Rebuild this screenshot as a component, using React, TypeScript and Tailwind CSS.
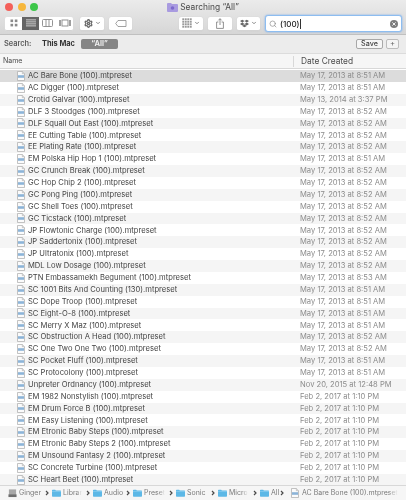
import React from "react";
import { FaDropbox } from "react-icons/fa";
import { Search, Settings, ChevronDown } from "lucide-react";

const rows: [string, string][] = [
  ["AC Bare Bone (100).mtpreset", "May 17, 2013 at 8:51 AM"],
  ["AC Digger (100).mtpreset", "May 17, 2013 at 8:51 AM"],
  ["Crotid Galvar (100).mtpreset", "May 13, 2014 at 3:37 PM"],
  ["DLF 3 Stoodges (100).mtpreset", "May 17, 2013 at 8:52 AM"],
  ["DLF Squall Out East (100).mtpreset", "May 17, 2013 at 8:52 AM"],
  ["EE Cutting Table (100).mtpreset", "May 17, 2013 at 8:52 AM"],
  ["EE Plating Rate (100).mtpreset", "May 17, 2013 at 8:52 AM"],
  ["EM Polska Hip Hop 1 (100).mtpreset", "May 17, 2013 at 8:51 AM"],
  ["GC Crunch Break (100).mtpreset", "May 17, 2013 at 8:52 AM"],
  ["GC Hop Chip 2 (100).mtpreset", "May 17, 2013 at 8:52 AM"],
  ["GC Pong Ping (100).mtpreset", "May 17, 2013 at 8:52 AM"],
  ["GC Shell Toes (100).mtpreset", "May 17, 2013 at 8:52 AM"],
  ["GC Ticstack (100).mtpreset", "May 17, 2013 at 8:52 AM"],
  ["JP Flowtonic Charge (100).mtpreset", "May 17, 2013 at 8:52 AM"],
  ["JP Saddertonix (100).mtpreset", "May 17, 2013 at 8:52 AM"],
  ["JP Ultratonix (100).mtpreset", "May 17, 2013 at 8:52 AM"],
  ["MDL Low Dosage (100).mtpreset", "May 17, 2013 at 8:52 AM"],
  ["PTN Embassamekh Begument (100).mtpreset", "May 17, 2013 at 8:53 AM"],
  ["SC 1001 Bits And Counting (130).mtpreset", "May 17, 2013 at 8:51 AM"],
  ["SC Dope Troop (100).mtpreset", "May 17, 2013 at 8:51 AM"],
  ["SC Eight-O-8 (100).mtpreset", "May 17, 2013 at 8:51 AM"],
  ["SC Merry X Maz (100).mtpreset", "May 17, 2013 at 8:51 AM"],
  ["SC Obstruction A Head (100).mtpreset", "May 17, 2013 at 8:52 AM"],
  ["SC One Two One Two (100).mtpreset", "May 17, 2013 at 8:52 AM"],
  ["SC Pocket Fluff (100).mtpreset", "May 17, 2013 at 8:51 AM"],
  ["SC Protocolony (100).mtpreset", "May 17, 2013 at 8:51 AM"],
  ["Unpreter Ordnancy (100).mtpreset", "Nov 20, 2015 at 12:48 PM"],
  ["EM 1982 Nonstylish (100).mtpreset", "Feb 2, 2017 at 1:10 PM"],
  ["EM Drum Force B (100).mtpreset", "Feb 2, 2017 at 1:10 PM"],
  ["EM Easy Listening (100).mtpreset", "Feb 2, 2017 at 1:10 PM"],
  ["EM Etronic Baby Steps (100).mtpreset", "Feb 2, 2017 at 1:10 PM"],
  ["EM Etronic Baby Steps 2 (100).mtpreset", "Feb 2, 2017 at 1:10 PM"],
  ["EM Unsound Fantasy 2 (100).mtpreset", "Feb 2, 2017 at 1:10 PM"],
  ["SC Concrete Turbine (100).mtpreset", "Feb 2, 2017 at 1:10 PM"],
  ["SC Heart Beet (100).mtpreset", "Feb 2, 2017 at 1:10 PM"],
];

function FileIcon() {
  return (
    <svg width="8" height="10" viewBox="0 0 8 10" className="shrink-0">
      <path d="M0.5 0.5H5.3L7.5 2.7V9.5H0.5Z" fill="#fbfbfb" stroke="#a9a9a9" strokeWidth="0.7" />
      <rect x="1" y="4.2" width="6" height="2.6" fill="#8cb4d8" />
      <path d="M5.3 0.5V2.7H7.5" fill="#e2e2e2" stroke="#a9a9a9" strokeWidth="0.5" />
    </svg>
  );
}

function Folder() {
  return (
    <svg width="9" height="8" viewBox="0 0 11 9" className="shrink-0">
      <path d="M0 1.2Q0 0.4 0.8 0.4H3.8L4.8 1.4H10.2Q11 1.4 11 2.2V8.2Q11 9 10.2 9H0.8Q0 9 0 8.2Z" fill="#5db8e6" />
      <rect x="0" y="2" width="11" height="0.7" fill="#9ad6f3" />
    </svg>
  );
}

function Chev({ className = "mr-[3px]" }: { className?: string }) {
  return (
    <svg width="4" height="6" viewBox="0 0 4 6" className={`shrink-0 ${className}`}>
      <path d="M1 1L3 3L1 5" fill="none" stroke="#4a4a4a" strokeWidth="1.2" />
    </svg>
  );
}

function Crumb({ name, w, fade }: { name: string; w: string; fade?: boolean }) {
  return (
    <div className={`flex items-center gap-[2px] shrink-0 ${w}`}>
      <Folder />
      <span className={`whitespace-nowrap text-[#7a7a7a] ${fade ? "[mask-image:linear-gradient(to_right,black_70%,transparent)]" : ""}`}>{name}</span>
    </div>
  );
}

const btn = "h-[14px] bg-white rounded-[2px] border-b border-[#d4d4d4] flex items-center justify-center gap-[2px] shadow-[0_0_1px_rgba(0,0,0,0.15)]";

export default function App() {
  return (
    <div
      className="w-[406px] h-[500px] overflow-hidden bg-white flex flex-col text-[7.6px] blur-[0.4px] text-[#444]"
      style={{ fontFamily: "Inter, 'Liberation Sans', sans-serif" }}
    >
      {/* Title + toolbar */}
      <div className="h-[35px] shrink-0 bg-gradient-to-b from-[#ebebeb] to-[#d6d6d6] border-b border-[#c0c0c0] flex flex-col">
        <div className="h-[15px] relative flex items-center justify-center gap-[2px]">
          <div className="absolute left-[5px] top-[3px] flex gap-[4.5px]">
            <span className="w-[8px] h-[8px] rounded-full bg-[#f4605a]" />
            <span className="w-[8px] h-[8px] rounded-full bg-[#f6b73c]" />
            <span className="w-[8px] h-[8px] rounded-full bg-[#3dc649]" />
          </div>
          <svg width="11" height="9" viewBox="0 0 11 9">
            <path d="M0 1Q0 0 1 0H4L5 1H10Q11 1 11 2V8Q11 9 10 9H1Q0 9 0 8Z" fill="#a99be0" />
            <circle cx="5.5" cy="5" r="1.8" fill="#7c68cc" />
          </svg>
          <span className="text-[#4a4a4a] text-[8.4px]">Searching “All”</span>
        </div>
        <div className="flex items-center pl-[5px] pr-[4px]">
          <div className="flex w-[68px] h-[14px] bg-white rounded-[2px] border-b border-[#d4d4d4]">
            <div className="flex-1 flex items-center justify-center">
              <svg width="8" height="8" viewBox="0 0 8 8" fill="#8a8a8a">
                <rect x="0.5" y="0.5" width="2.6" height="2.6" />
                <rect x="4.8" y="0.5" width="2.6" height="2.6" />
                <rect x="0.5" y="4.8" width="2.6" height="2.6" />
                <rect x="4.8" y="4.8" width="2.6" height="2.6" />
              </svg>
            </div>
            <div className="flex-1 flex items-center justify-center bg-[#656565]">
              <svg width="10" height="8" viewBox="0 0 10 8" fill="#e8e8e8">
                <rect y="0.5" width="10" height="0.8" />
                <rect y="2.5" width="10" height="0.8" />
                <rect y="4.5" width="10" height="0.8" />
                <rect y="6.5" width="10" height="0.8" />
              </svg>
            </div>
            <div className="flex-1 flex items-center justify-center">
              <svg width="11" height="8" viewBox="0 0 11 8" fill="none" stroke="#888" strokeWidth="0.9">
                <rect x="0.5" y="0.5" width="10" height="7" rx="1" />
                <path d="M4 0.5V7.5M7 0.5V7.5" />
              </svg>
            </div>
            <div className="flex-1 flex items-center justify-center">
              <svg width="12" height="8" viewBox="0 0 12 8" fill="none" stroke="#888" strokeWidth="0.9">
                <rect x="3" y="1" width="6" height="6" />
                <path d="M1 1V7M11 1V7" strokeWidth="1.6" />
              </svg>
            </div>
          </div>
          <div className={`${btn} w-[24px] ml-[7px]`}>
            <Settings size={9} strokeWidth={3.4} className="text-[#666]" />
            <ChevronDown size={6} strokeWidth={3} className="text-[#666]" />
          </div>
          <div className={`${btn} w-[23px] ml-[5px]`}>
            <svg width="12" height="7" viewBox="0 0 12 7" fill="none" stroke="#8a8a8a" strokeWidth="0.8">
              <path d="M3 0.5H11V6.5H3L0.7 3.5Z" />
            </svg>
          </div>
          <div className={`${btn} w-[24px] ml-[47px]`}>
            <svg width="10" height="10" viewBox="0 0 10 10" fill="#999">
              {[0, 1, 2, 3].map((r) =>
                [0, 1, 2, 3].map((c) => <rect key={`${r}${c}`} x={c * 2.5 + 0.3} y={r * 2.5 + 0.3} width="1.9" height="1.9" />)
              )}
            </svg>
            <ChevronDown size={6} strokeWidth={3} className="text-[#666]" />
          </div>
          <div className={`${btn} w-[24px] ml-[5px]`}>
            <svg width="8" height="11" viewBox="0 0 8 11" fill="none" stroke="#777" strokeWidth="0.8">
              <path d="M2.4 4H0.6V10.4H7.4V4H5.6M4 7V0.8M2.3 2.4L4 0.7L5.7 2.4" />
            </svg>
          </div>
          <div className={`${btn} w-[23px] ml-[5px]`}>
            <FaDropbox size={9} className="text-[#666]" />
            <ChevronDown size={6} strokeWidth={3} className="text-[#666]" />
          </div>
          <div className="ml-[5px] w-[137px] h-[17px] bg-white rounded-[3px] border border-[#8dbdf0] shadow-[0_0_2px_#6fa8ee] flex items-center px-[3px] gap-[3px]">
            <Search size={8} className="text-[#8a8a8a] shrink-0" />
            <span className="text-[#222] text-[8px] font-medium">(100)</span>
            <span className="w-px h-[10px] bg-[#333] -ml-[3px]" />
            <span className="ml-auto w-[8px] h-[8px] rounded-full bg-[#7d7d7d] flex items-center justify-center">
              <svg width="4" height="4" viewBox="0 0 4 4" stroke="#fff" strokeWidth="0.9">
                <path d="M0.4 0.4L3.6 3.6M3.6 0.4L0.4 3.6" />
              </svg>
            </span>
          </div>
        </div>
      </div>

      {/* Search scope */}
      <div className="h-[19px] shrink-0 bg-[#ececec] border-b border-[#dcdcdc] flex items-center pl-[4px] pr-[7px] whitespace-nowrap">
        <span className="font-semibold text-[#5c5c5c] w-[38px] text-[7.4px]">Search:</span>
        <span className="font-bold text-[#333] w-[39px] text-[7.4px]">This Mac</span>
        <span className="w-[37px] h-[10px] rounded-[2px] bg-[#858585] text-[#f5f5f5] font-semibold flex items-center justify-center">“All”</span>
        <span className="ml-auto w-[27px] h-[10px] rounded-[2px] border border-[#a8a8a8] bg-[#f6f6f6] text-[#444] font-medium text-[7.2px] flex items-center justify-center">Save</span>
        <span className="ml-[3px] w-[13px] h-[10px] rounded-[2px] border border-[#bcbcbc] bg-[#f4f4f4] text-[#666] flex items-center justify-center">+</span>
      </div>

      {/* Column headers */}
      <div className="h-[15px] shrink-0 bg-[#f6f6f6] border-b border-[#d8d8d8] flex items-center text-[#4d4d4d]">
        <span className="pl-[3px] w-[293px] text-[7px]">Name</span>
        <span className="border-l border-[#d8d8d8] pl-[7px] h-[11px] flex items-center text-[8.4px]">Date Created</span>
      </div>

      {/* Rows */}
      <div className="pt-[1px] flex-1 min-h-0 overflow-hidden">
        {rows.map(([name, date], i) => (
          <div
            key={i}
            className={`h-[11.88px] flex items-center ${i === 0 ? "bg-[#dcdcdc]" : i % 2 === 0 ? "bg-[#f5f5f5]" : "bg-white"}`}
          >
            <div className="w-[300px] pl-[17px] flex items-center gap-[3px] shrink-0">
              <FileIcon />
              <span className="whitespace-nowrap">{name}</span>
            </div>
            <span className="whitespace-nowrap text-[#8c8c8c]">{date}</span>
          </div>
        ))}
      </div>

      {/* Path bar */}
      <div className="h-[15px] shrink-0 bg-[#f6f6f6] border-t border-[#d8d8d8] flex items-center pl-[8px] text-[7px] overflow-hidden">
        <div className="flex items-center gap-[2px] w-[37px] shrink-0">
          <svg width="9" height="10" viewBox="0 0 10 10" className="shrink-0">
            <rect x="1" y="1" width="8" height="6" fill="#a8a8a8" />
            <rect x="0.5" y="6.5" width="9" height="3" fill="#6e6e6e" />
          </svg>
          <span className="text-[#7a7a7a]">Ginger</span>
        </div>
        <Chev />
        <Crumb name="Librar" w="w-[34px]" fade />
        <Chev />
        <Crumb name="Audio" w="w-[33px]" />
        <Chev />
        <Crumb name="Preset" w="w-[36px]" fade />
        <Chev />
        <Crumb name="Sonic" w="w-[35px]" />
        <Chev />
        <Crumb name="Micro" w="w-[35px]" fade />
        <Chev />
        <Crumb name="All" w="w-[20px]" />
        <Chev className="mr-[7px]" />
        <div className="flex items-center gap-[3px] shrink-0">
          <FileIcon />
          <span className="whitespace-nowrap text-[#7a7a7a] [mask-image:linear-gradient(to_right,black_90%,transparent)]">AC Bare Bone (100).mtpreset</span>
        </div>
      </div>
    </div>
  );
}
